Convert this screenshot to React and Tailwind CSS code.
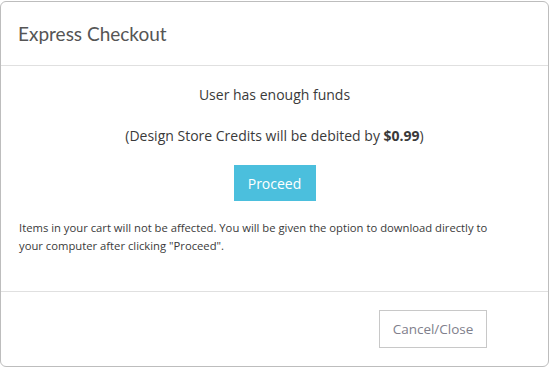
import React from 'react';

const App = () => {
    return (
        <div className="w-[552px] h-[368px] bg-white overflow-hidden font-['Open_Sans',sans-serif]">
            <div className="mt-px w-[549px] h-[366px] border border-[#bdbdbd] rounded-md bg-white flex flex-col">
                {/* Header */}
                <div className="h-[64px] shrink-0 border-b border-[#e0e0e0] flex items-center px-[17px]">
                    <h3 className="font-['Lato',sans-serif] text-[19px] text-[#555] leading-none">Express Checkout</h3>
                </div>

                {/* Body */}
                <div className="flex-1 px-[18px] pt-[19px] flex flex-col items-center">
                    <p className="text-[14px] leading-[20px] text-[#3a3a3a]">User has enough funds</p>
                    <p className="mt-[21px] text-[14px] leading-[20px] text-[#3a3a3a]">
                        (Design Store Credits will be debited by <span className="font-bold">$0.99</span>)
                    </p>
                    <button className="mt-[19px] h-[36px] w-[82px] bg-[#4bbfdd] text-white text-[14px]">Proceed</button>
                    <p className="mt-[18px] self-stretch pr-[28px] text-[11.25px] leading-[18px] text-[#3a3a3a]">
                        Items in your cart will not be affected. You will be given the option to download directly to your computer after clicking "Proceed".
                    </p>
                </div>

                {/* Footer */}
                <div className="h-[75px] shrink-0 border-t border-[#e0e0e0] flex justify-end items-start pt-[18px] pr-[61px]">
                    <button className="h-[38px] w-[108px] border border-[#c8c8c8] text-[#80808c] text-[13.5px]">Cancel/Close</button>
                </div>
            </div>
        </div>
    );
};

export default App;
